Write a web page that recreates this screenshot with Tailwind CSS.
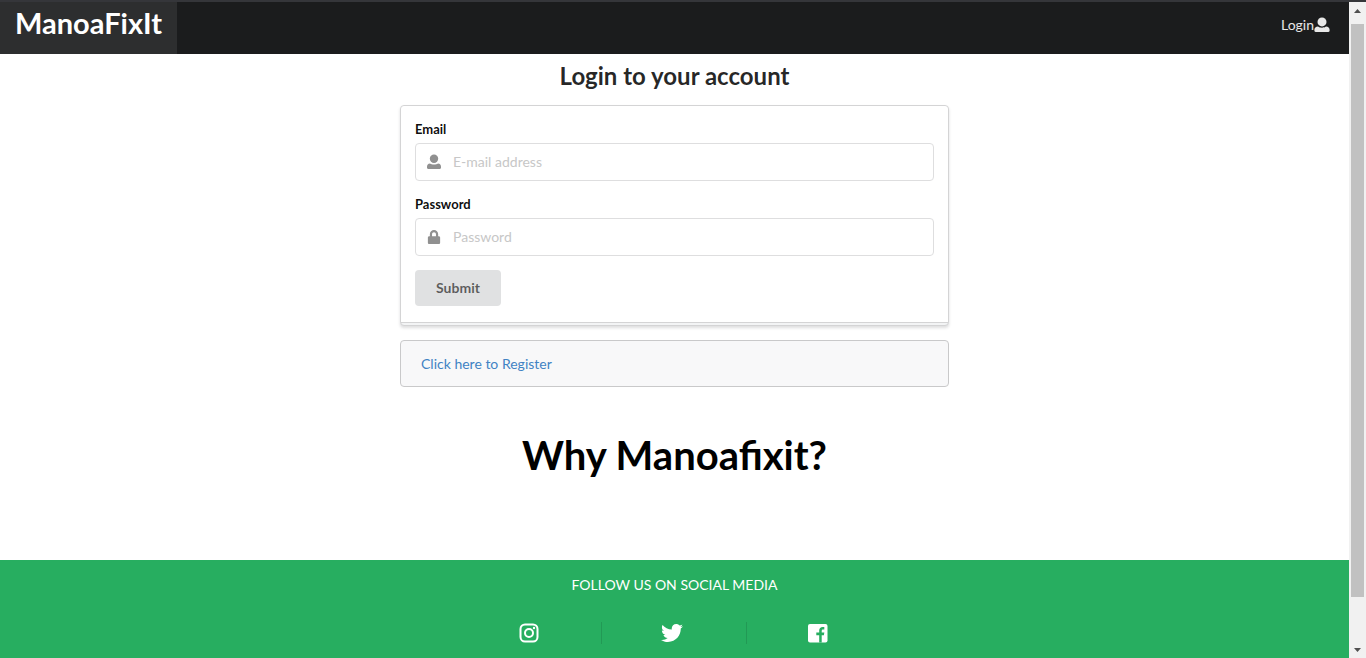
<!DOCTYPE html>
<html lang="en">
<head>
<meta charset="utf-8">
<meta name="viewport" content="width=device-width, initial-scale=1">
<title>ManoaFixIt</title>
<script src="https://cdn.jsdelivr.net/npm/@tailwindcss/browser@4"></script>
</head>
<body class="flex h-screen overflow-hidden bg-white font-['Lato',sans-serif] text-sm text-black/85">
<div class="flex min-w-0 flex-1 flex-col">
  <header class="flex h-[54px] shrink-0 items-stretch justify-between border-t-2 border-[#35363a] bg-[#1b1c1d] text-white">
    <a href="#" class="flex bg-[#2d2e2f] px-[15px] pt-[3px] text-[29px] leading-9 font-bold">ManoaFixIt</a>
    <a href="#" class="mr-[19px] flex items-center pb-1.5 text-white/90">Login
      <svg class="size-4" viewBox="0 0 16 16" fill="currentColor" aria-hidden="true"><circle cx="8" cy="4.900" r="4.500"/><path d="M4 9.500c1 .8 2.400 1.200 4 1.200s3-.4 4-1.200c2.200 0 3.600 1.300 3.600 3.300v1c0 .7-.5 1.200-1.200 1.200H1.600c-.7 0-1.200-.5-1.200-1.200v-1c0-2 1.400-3.300 3.600-3.300z"/></svg>
    </a>
  </header>

  <main class="mx-auto w-[549px] max-w-full shrink-0 pt-2">
    <h2 class="text-center text-2xl leading-7 font-bold">Login to your account</h2>
    <form class="mt-[15px] rounded border border-[#d4d4d5] bg-[#f3f4f5] pb-0.5 shadow-[0_2px_3px_rgba(34,36,38,0.15)]">
      <div class="rounded-t border-b border-[#d4d4d5] bg-white px-3.5 pt-3.5 pb-4">
        <label for="email" class="mb-1 block text-[13px] leading-[19px] font-bold text-black/95">Email</label>
        <div class="relative">
          <input id="email" type="email" placeholder="E-mail address" class="block h-[38px] w-full rounded border border-[#dededf] bg-white pr-3.5 pb-0.5 pl-[37px] outline-none placeholder:text-[#c7c7c7]">
          <svg class="pointer-events-none absolute top-[11px] left-[11px] size-4 text-[#909090]" viewBox="0 0 16 16" fill="currentColor" aria-hidden="true"><circle cx="8" cy="4.700" r="4.200"/><path d="M4 9.500c1 .7 2.400 1.100 4 1.100s3-.4 4-1.100c2 0 3 1.300 3 3.300v1c0 .7-.5 1.200-1.200 1.200H2.200c-.7 0-1.200-.5-1.200-1.200v-1c0-2 1-3.300 3-3.300z"/></svg>
        </div>
        <label for="password" class="mt-3.5 mb-1 block text-[13px] leading-[19px] font-bold text-black/95">Password</label>
        <div class="relative">
          <input id="password" type="password" placeholder="Password" class="block h-[38px] w-full rounded border border-[#dededf] bg-white pr-3.5 pb-0.5 pl-[37px] outline-none placeholder:text-[#c7c7c7]">
          <svg class="pointer-events-none absolute top-[12px] left-[12px] h-3.5 w-3.5 text-[#909090]" viewBox="0 0 448 512" fill="currentColor" aria-hidden="true"><path d="M400 224h-24v-72C376 68.200 307.800 0 224 0S72 68.200 72 152v72H48c-26.500 0-48 21.500-48 48v192c0 26.500 21.500 48 48 48h352c26.500 0 48-21.500 48-48V272c0-26.500-21.500-48-48-48zm-104 0H152v-72c0-39.700 32.300-72 72-72s72 32.300 72 72v72z"/></svg>
        </div>
        <button type="submit" class="mt-3.5 block h-9 w-[86px] rounded bg-[#e0e1e2] font-bold text-black/60">Submit</button>
      </div>
    </form>
    <div class="mt-3.5 rounded border border-[#c9c9ca] bg-[#f8f8f9] px-5 py-3.5 leading-[17px]"><a href="#" class="text-[#4183c4]">Click here to Register</a></div>
    <h1 class="mt-11 text-center text-[40px] leading-12 font-bold text-black">Why Manoafixit?</h1>
  </main>

  <footer class="mt-auto flex h-[98px] shrink-0 flex-col items-center bg-[#27ae60] pt-4 text-white">
    <p class="leading-[18px]">FOLLOW US ON SOCIAL MEDIA</p>
    <nav class="mt-7 flex h-[22px] items-center divide-x divide-[#229955]" aria-label="Social media">
      <a href="#" aria-label="Instagram" class="flex h-full w-[145px] items-center justify-center"><svg class="size-[22px]" viewBox="0 0 22 22" fill="none" stroke="currentColor" stroke-width="2" aria-hidden="true"><rect x="2.500" y="2.500" width="17" height="17" rx="4.500"/><circle cx="11" cy="11" r="4"/><circle cx="16" cy="6" r="1.200" fill="currentColor" stroke="none"/></svg></a>
      <a href="#" aria-label="Twitter" class="flex h-full w-[145px] items-center justify-center pr-1"><svg class="size-[22px]" viewBox="0 0 512 512" fill="currentColor" aria-hidden="true"><path d="M459.370 151.716c.325 4.548.325 9.097.325 13.645 0 138.720-105.583 298.558-298.558 298.558-59.452 0-114.680-17.219-161.137-47.106 8.447.974 16.568 1.299 25.340 1.299 49.055 0 94.213-16.568 130.274-44.832-46.132-.975-84.792-31.188-98.112-72.772 6.498.974 12.995 1.624 19.818 1.624 9.421 0 18.843-1.300 27.614-3.573-48.081-9.747-84.143-51.980-84.143-102.985v-1.299c13.969 7.797 30.214 12.670 47.431 13.319-28.264-18.843-46.781-51.005-46.781-87.391 0-19.492 5.197-37.360 14.294-52.954 51.655 63.675 129.300 105.258 216.365 109.807-1.624-7.797-2.599-15.918-2.599-24.040 0-57.828 46.782-104.934 104.934-104.934 30.213 0 57.502 12.670 76.670 33.137 23.715-4.548 46.456-13.320 66.599-25.340-7.798 24.366-24.366 44.833-46.132 57.827 21.117-2.273 41.584-8.122 60.426-16.243-14.292 20.791-32.161 39.308-52.628 54.253z"/></svg></a>
      <a href="#" aria-label="Facebook" class="flex h-full w-[145px] items-center justify-center pr-1"><svg class="size-[22px]" viewBox="0 0 22 22" aria-hidden="true"><rect x="1" y="2" width="19.500" height="18.500" rx="2" fill="currentColor"/><path d="M12.200 20.500v-7.300H9.300v-2.700h2.900V8.600c0-2.500 1.400-3.700 3.500-3.700l1.600.1v2.400h-1.200c-1.100 0-1.400.6-1.400 1.500v1.600h2.600l-.4 2.700h-2.200v7.300z" fill="#27ae60"/></svg></a>
    </nav>
  </footer>
</div>

<aside class="flex w-[17px] shrink-0 flex-col items-center border-t-2 border-[#35363a] bg-[#f1f1f1]" aria-label="Scrollbar">
  <svg class="h-[22px] w-[17px] shrink-0" viewBox="0 0 17 22" fill="#505050" aria-hidden="true"><path d="M5 11h7L8.500 7z"/></svg>
  <div class="h-[573px] w-[13px] bg-[#c1c1c1]"></div>
  <svg class="mt-auto h-[17px] w-[17px] shrink-0" viewBox="0 0 17 17" fill="#505050" aria-hidden="true"><path d="M5 7h7l-3.500 4z"/></svg>
</aside>
</body>
</html>
